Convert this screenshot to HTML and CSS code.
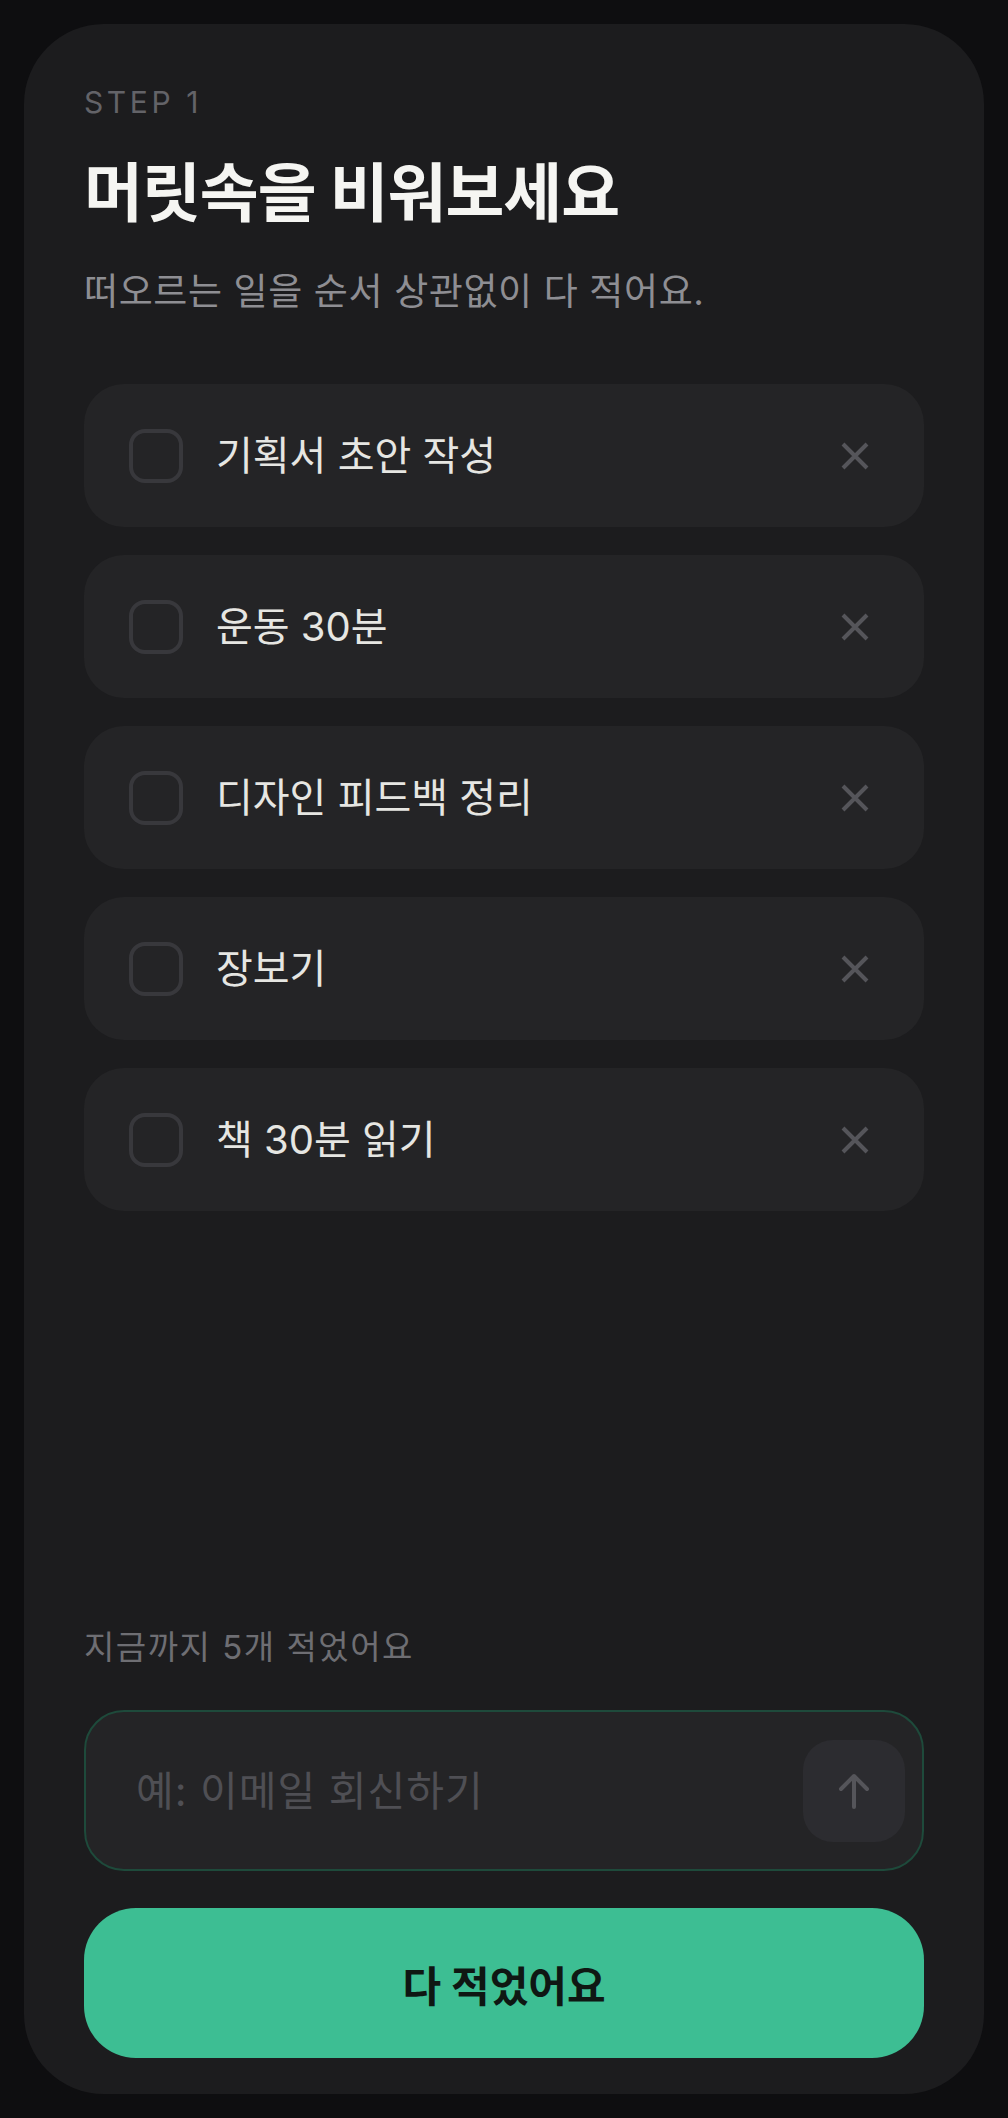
FILE: index.html
```html
<!DOCTYPE html>
<html lang="ko">
<head>
<meta charset="utf-8">
<title>STEP 1 - 머릿속을 비워보세요</title>
<link rel="stylesheet" href="styles.css">
</head>
<body>
<main class="card">
  <header class="head">
    <p class="step">STEP 1</p>
    <h1 class="title">머릿속을 비워보세요</h1>
    <p class="sub">떠오르는 일을 순서 상관없이 다 적어요.</p>
  </header>

  <ul class="list">
    <li class="item">
      <span class="check"></span>
      <span class="label">기획서 초안 작성</span>
      <button class="del" aria-label="삭제"><svg viewBox="0 0 28 28" width="28" height="28"><path d="M2 2 L26 26 M26 2 L2 26" /></svg></button>
    </li>
    <li class="item">
      <span class="check"></span>
      <span class="label">운동 30분</span>
      <button class="del" aria-label="삭제"><svg viewBox="0 0 28 28" width="28" height="28"><path d="M2 2 L26 26 M26 2 L2 26" /></svg></button>
    </li>
    <li class="item">
      <span class="check"></span>
      <span class="label">디자인 피드백 정리</span>
      <button class="del" aria-label="삭제"><svg viewBox="0 0 28 28" width="28" height="28"><path d="M2 2 L26 26 M26 2 L2 26" /></svg></button>
    </li>
    <li class="item">
      <span class="check"></span>
      <span class="label">장보기</span>
      <button class="del" aria-label="삭제"><svg viewBox="0 0 28 28" width="28" height="28"><path d="M2 2 L26 26 M26 2 L2 26" /></svg></button>
    </li>
    <li class="item">
      <span class="check"></span>
      <span class="label">책 30분 읽기</span>
      <button class="del" aria-label="삭제"><svg viewBox="0 0 28 28" width="28" height="28"><path d="M2 2 L26 26 M26 2 L2 26" /></svg></button>
    </li>
  </ul>

  <footer class="foot">
    <p class="count">지금까지 5개 적었어요</p>
    <div class="entry">
      <input class="field" type="text" placeholder="예: 이메일 회신하기">
      <button class="send" aria-label="추가"><svg viewBox="0 0 36 36" width="36" height="36"><path d="M18 34 V3 M5 16 L18 3 L31 16" /></svg></button>
    </div>
    <button class="done">다 적었어요</button>
  </footer>
</main>
</body>
</html>
```
FILE: styles.css
```css
* { box-sizing: border-box; }

html, body {
  margin: 0;
  padding: 0;
  background: #0e0e10;
}

body {
  padding: 24px;
  min-height: 2118px;
  font-family: Inter, "Noto Sans CJK KR", "Noto Sans", sans-serif;
  color: #f2f2ef;
}

.card {
  display: flex;
  flex-direction: column;
  height: 2070px;
  background: #1c1c1e;
  border-radius: 80px;
  padding: 60px 60px 36px;
}

.head { display: flex; flex-direction: column; }

.step {
  margin: 0;
  font-size: 30px;
  line-height: 36px;
  letter-spacing: 3.6px;
  color: #636368;
}

.title {
  margin: 36px 0 0;
  font-size: 64px;
  line-height: 74px;
  font-weight: 700;
  letter-spacing: -1px;
  color: #f5f5f2;
}

.sub {
  margin: 40px 0 0;
  font-size: 37px;
  line-height: 44px;
  letter-spacing: 0.6px;
  color: #8e8e93;
}

.list {
  list-style: none;
  margin: 70px 0 0;
  padding: 0;
  display: flex;
  flex-direction: column;
  gap: 28px;
}

.item {
  display: flex;
  align-items: center;
  height: 143px;
  padding: 0 55px 0 45px;
  background: #242426;
  border-radius: 40px;
}

.check {
  flex: none;
  width: 54px;
  height: 54px;
  border: 4px solid #38383c;
  border-radius: 16px;
}

.label {
  flex: 1;
  margin-left: 33px;
  font-size: 40px;
  line-height: 48px;
  color: #e6e6e2;
}

.del {
  flex: none;
  width: 28px;
  height: 28px;
  padding: 0;
  border: 0;
  background: none;
  display: flex;
}

.del path {
  fill: none;
  stroke: #55555a;
  stroke-width: 4;
}

.foot {
  margin-top: auto;
  display: flex;
  flex-direction: column;
}

.count {
  margin: 0;
  font-size: 33px;
  line-height: 40px;
  letter-spacing: 1.5px;
  color: #6e6e73;
}

.entry {
  margin-top: 43px;
  height: 161px;
  display: flex;
  align-items: center;
  gap: 16px;
  padding: 0 17px 0 50px;
  background: #242426;
  border: 2.5px solid #1e4a3b;
  border-radius: 40px;
}

.field {
  flex: 1;
  min-width: 0;
  border: 0;
  outline: 0;
  background: transparent;
  padding: 0;
  font-family: Inter, "Noto Sans CJK KR", "Noto Sans", sans-serif;
  font-size: 41px;
  letter-spacing: 1px;
  color: #e6e6e2;
}

.field::placeholder { color: #4f4f54; }

.send {
  flex: none;
  width: 102px;
  height: 102px;
  border: 0;
  border-radius: 30px;
  background: #2c2c30;
  display: flex;
  align-items: center;
  justify-content: center;
  padding: 0;
}

.send path {
  fill: none;
  stroke: #55555a;
  stroke-width: 4;
  stroke-linecap: round;
  stroke-linejoin: round;
}

.done {
  margin-top: 37px;
  height: 150px;
  border: 0;
  border-radius: 52px;
  background: #3dbe93;
  font-family: Inter, "Noto Sans CJK KR", "Noto Sans", sans-serif;
  font-size: 42px;
  font-weight: 700;
  color: #0f1713;
}
```
